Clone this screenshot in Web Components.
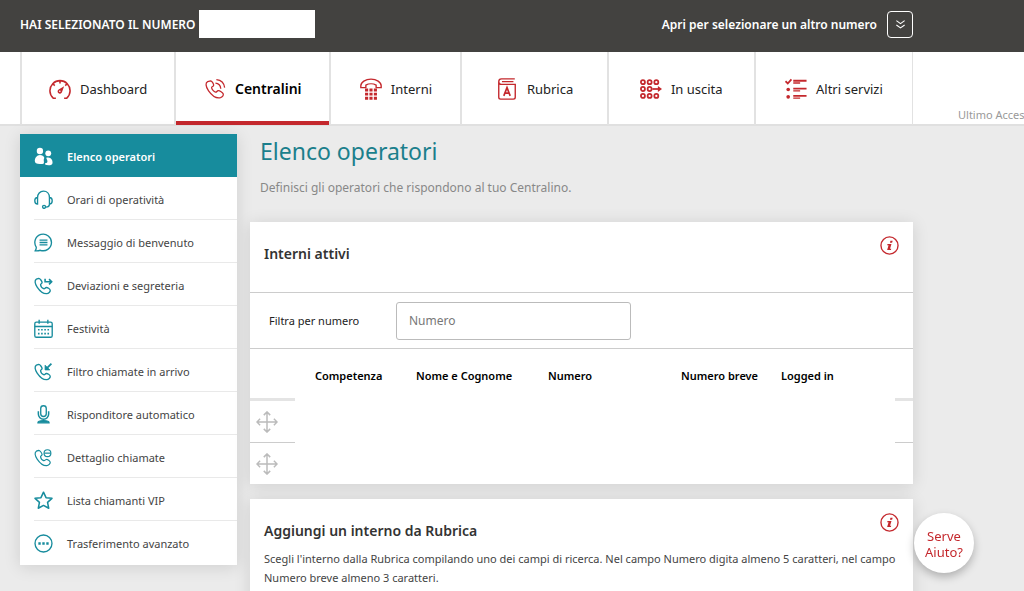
<!DOCTYPE html>
<html lang="it">
<head>
<meta charset="utf-8">
<meta name="viewport" content="width=device-width, initial-scale=1">
<title>Elenco operatori</title>
<style>
  html, body { margin: 0; }
  body {
    --red: #c4282d;
    --teal: #178c9d;
    --ink: #333;
    --left: 20px;
    --right: 111px;
    background: #ebebeb;
    color: var(--ink);
    font-family: "Noto Sans", sans-serif;
    font-size: 11px;
    overflow-x: hidden;
  }
</style>
</head>
<body>
<portal-app></portal-app>

<script>
const ICONS = {
  gauge: ['0 0 24 24', `<path d="M7.500 22H4.600A11 11 0 1 1 19.400 22H16.500M12 3v3M4.500 6.500l1.800 1.800M19.500 6.500l-1.800 1.800" stroke-width="1.700"/><path d="M16.500 9l-6 3.500a2.500 2.500 0 1 0 3.500 3.400z" fill="currentColor" stroke="none"/><circle cx="11.800" cy="14.400" r=".9" fill="#fff" stroke="none"/>`],
  phonewave: ['0 0 24 24', `<path d="M7.300 3.200L4 4C1.500 5 1.500 9 5 14s8.500 8.500 13 7.500c2-.5 3.500-2.500 3-4-.5-1.500-4-4-5.500-3.700-1.500.3-1.500 2-3 1.700-1.700-.5-4-3-4.200-5 0-1.300 1.800-1 2.200-2.500.3-1.200-1.500-4.300-3.200-4.800z" stroke-width="1.400"/><path d="M12.500 5.700c3.300.3 5.500 2.700 5.800 6M13.500 1.700c5 .5 8.500 4 9 8.800" stroke-width="1.400"/>`],
  deskphone: ['0 0 24 24', `<path d="M.900 8.500C.900 4.500 6 1.200 12 1.200S23.100 4.500 23.100 8.500V10.500h-5.500V7.800C14.500 6 9.500 6 6.400 7.800V10.500H.900z" stroke-width="1.500"/><path d="M5.500 11.500h3.400v3.200H5.500zM10.300 11.500h3.400v3.200h-3.400zM15.100 11.500h3.400v3.200h-3.400zM5.500 16h3.400v3.200H5.500zM10.300 16h3.400v3.200h-3.400zM15.100 16h3.400v3.200h-3.400zM5.500 20.500h3.400v3.200H5.500zM10.300 20.500h3.400v3.200h-3.400zM15.100 20.500h3.400v3.200h-3.400z" fill="currentColor" stroke="none"/>`],
  book: ['0 0 20 24', `<path d="M18.500 1H4a3 3 0 0 0 0 6h15v14a2 2 0 0 1-2 2H3a2 2 0 0 1-2-2V4M4.500 4h12.500" stroke-width="1.500"/><path d="M6.500 19.500L10 10.500l3.500 9M7.800 16.500h4.400" stroke-width="1.800"/>`],
  outgoing: ['0 0 24 24', `<g stroke-width="1.900"><circle cx="3.200" cy="4.500" r="2.200"/><circle cx="10.500" cy="4.500" r="2.200"/><circle cx="17.800" cy="4.500" r="2.200"/><circle cx="3.200" cy="12" r="2.200"/><circle cx="10.500" cy="12" r="2.200"/><circle cx="3.200" cy="19.500" r="2.200"/><circle cx="10.500" cy="19.500" r="2.200"/><circle cx="17.800" cy="19.500" r="2.200"/><path d="M13.500 12h8"/></g><path d="M19.500 8.800L24 12l-4.500 3.200z" fill="currentColor" stroke="none"/>`],
  checklist: ['0 0 24 24', `<path d="M.500 3.500L3 6l4-4.500" stroke-width="2"/><circle cx="3.500" cy="12.500" r="2" fill="currentColor" stroke="none"/><circle cx="3.500" cy="20.500" r="2" fill="currentColor" stroke="none"/><path d="M9 3h14.500M9 11.500h14.500M9 19.500h14.500" stroke-width="2"/><path d="M9 5.500h7.500M9 14h7.500M9 22h7.500" stroke-width="1.500"/>`],
  people: ['0 0 24 24', `<g fill="currentColor" stroke="none"><circle cx="7.500" cy="5" r="4"/><path d="M7.500 10c-4 0-6.500 4-6.500 7.500 0 3 2 4 6.500 4 2.500 0 4-.2 5-1 .5-2-1-4 .5-7-.8-2.200-2.700-3.500-5.500-3.500z"/><circle cx="18" cy="8" r="3.700"/><path d="M15.500 13.500c3-1 6.500 0 7.500 3.500 1 3.500.5 6-4.500 6-4 0-5-1-4.500-2.500 2.500 0 3.500-1.500 2.800-3.500-.4-1.200-1-2-1.300-3.500z"/></g>`],
  headset: ['0 0 24 24', `<path d="M4.500 9.500C4.500 5 7.500 1.500 12 1.500s7.500 3.500 7.500 8M4.500 9.300v8.400C2.300 17.700 1 16 1 13.500s1.300-4.200 3.500-4.200zM19.500 9.300v8.400c2.200 0 3.500-1.700 3.500-4.200s-1.300-4.200-3.500-4.200zM19.500 17.700c0 2.500-2 4-4.500 4"/><circle cx="12.700" cy="21.300" r="1.900"/>`],
  chat: ['0 0 24 24', `<path d="M1.500 22.500c1-1.500 1.600-3 1.300-4.800A10.500 10.500 0 1 1 8 21.800c-2 .7-4.500.9-6.500.7zM7 9h10M7 12h10M7 15h10"/>`],
  divert: ['0 0 24 24', `<path d="M6 3L3 4C.500 5.500 1 9.500 4 14s7.500 8.500 12 8.300c2.500-.2 4.700-2.500 4.500-4.300-.3-1.700-3.500-3.700-5-3.500s-1.800 2-3.300 1.500c-1.700-.7-3.700-3-3.900-5 0-1.300 1.700-1.200 1.900-2.700C10.300 6.700 7.500 3 6 3z"/><path d="M14 3.500v3.800H21M19 4l3.300 3.300L19 10.500" stroke-width="2"/>`],
  calendar: ['0 0 24 24', `<rect x="1" y="4" width="22" height="19" rx="2"/><path d="M1 9.500h22M6.500 1v5M17.500 1v5"/><path d="M5 13.500h2M9 13.500h2M13 13.500h2M17 13.500h2M5 18.500h2M9 18.500h2M13 18.500h2M17 18.500h2" stroke-width="2"/>`],
  incoming: ['0 0 24 24', `<path d="M6 3L3 4C.500 5.500 1 9.500 4 14s7.500 8.500 12 8.300c2.500-.2 4.700-2.500 4.500-4.300-.3-1.700-3.500-3.700-5-3.500s-1.800 2-3.300 1.500c-1.700-.7-3.700-3-3.900-5 0-1.300 1.700-1.200 1.900-2.700C10.300 6.700 7.500 3 6 3z"/><path d="M22 2L16 8" stroke-width="2.200"/><path d="M14 4v6h6z" fill="currentColor" stroke-width="1"/>`],
  mic: ['0 0 24 24', `<rect x="8.500" y="1" width="7" height="13.500" rx="3.500"/><path d="M5.500 8v3.500a6.500 6.500 0 0 0 13 0V8M12 18v3" stroke-width="1.900"/><path d="M5 22.500c0-2 2-2.700 7-2.700s7 .7 7 2.700z" fill="currentColor"/>`],
  detail: ['0 0 24 24', `<path d="M6 3L3 4C.500 5.500 1 9.500 4 14s7.500 8.500 12 8.300c2.500-.2 4.700-2.500 4.500-4.300-.3-1.700-3.500-3.700-5-3.500s-1.800 2-3.300 1.500c-1.700-.7-3.700-3-3.900-5 0-1.300 1.700-1.200 1.900-2.700C10.300 6.700 7.500 3 6 3z" stroke-width="1.500"/><circle cx="17" cy="6.500" r="4.300" stroke-width="1.500"/><path d="M13 6.500h8" stroke-width="1.500"/>`],
  star: ['0 0 24 24', `<path d="M12 1.500l3.200 6.900 7.500.9-5.600 5.100 1.500 7.400L12 18.200l-6.600 3.600 1.500-7.400L1.300 9.300l7.500-.9z" stroke-width="1.900" stroke-linejoin="round"/>`],
  dots: ['0 0 24 24', `<circle cx="12" cy="12" r="10.700"/><path d="M5.500 12h3M10.500 12h3M15.500 12h3" stroke-width="3"/>`],
  move: ['0 0 24 24', `<path d="M12 1.500v21M1.500 12h21M8.500 4.500L12 1l3.500 3.500M8.500 19.500L12 23l3.500-3.500M4.500 8.500L1 12l3.500 3.500M19.500 8.500L23 12l-3.500 3.500" stroke-width="1.600"/>`],
  chevrons: ['0 0 24 24', `<path d="M3 3.500l9 6.500 9-6.500M3 13l9 6.500 9-6.500" stroke-width="2.400"/>`],
  info: ['0 0 24 24', `<circle cx="12" cy="12" r="10.800" stroke-width="1.700"/><path d="M13.200 6h2.800l-.7 2.500h-2.800zM9.500 10h5l-1.800 6.200h1.500l-.4 1.600h-4.800l1.800-6.200H9z" fill="currentColor" stroke="none"/>`],
};

const define = (name, html, setup) => {
  const template = document.createElement('template');
  template.innerHTML = html;
  customElements.define(name, class extends HTMLElement {
    connectedCallback() {
      if (this.shadowRoot) return;
      const root = this.attachShadow({ mode: 'open' });
      root.append(template.content.cloneNode(true));
      if (setup) setup(this, root);
    }
  });
};

// Puts the icon named by the host's "icon" attribute before the link's label.
const addIcon = (host, root) => {
  const icon = document.createElement('ui-icon');
  icon.setAttribute('name', host.getAttribute('icon'));
  root.querySelector('a').prepend(icon);
};

define('ui-icon', `
  <style>
    :host { display: block; flex: none; width: var(--icon-size, 20px); height: var(--icon-size, 20px); }
    svg { display: block; width: 100%; height: 100%; fill: none; stroke: currentColor; stroke-width: 1.700; }
  </style>
  <svg aria-hidden="true"></svg>`, (host, root) => {
  const [box, body] = ICONS[host.getAttribute('name')];
  const svg = root.querySelector('svg');
  svg.setAttribute('viewBox', box);
  svg.innerHTML = body;
});

define('number-bar', `
  <style>
    :host {
      display: flex; align-items: center; justify-content: space-between;
      box-sizing: border-box; height: 52px; padding: 0 var(--right) 4px var(--left);
      background: #434240; color: #fff; font-size: 12px; font-weight: 600; white-space: nowrap;
    }
    div { display: flex; align-items: center; }
    .number { width: 116px; height: 28px; margin-left: 3px; background: #fff; }
    .open { gap: 10px; }
    button {
      --icon-size: 11px;
      display: grid; place-items: center; width: 26px; height: 27px; padding: 0;
      border: 1px solid #fff; border-radius: 4px; background: none; color: inherit;
    }
  </style>
  <div><span>HAI SELEZIONATO IL NUMERO</span><span class="number"></span></div>
  <div class="open"><span id="open">Apri per selezionare un altro numero</span>
    <button type="button" aria-labelledby="open"><ui-icon name="chevrons"></ui-icon></button></div>`);

define('nav-tab', `
  <style>
    :host { display: block; border-left: 2px solid #e2e2e2; }
    a {
      --icon-size: 22px;
      display: flex; align-items: center; justify-content: center; gap: 9px;
      box-sizing: border-box; height: 73px; padding-top: 4px; border-bottom: 4px solid transparent;
      color: #222; font-size: 13px; text-decoration: none; white-space: nowrap;
    }
    ui-icon { color: var(--red); }
    :host([active]) a { border-color: var(--red); color: #000; font-size: 14px; font-weight: 600; }
  </style>
  <a href="#"><slot></slot></a>`, addIcon);

define('main-nav', `
  <style>
    :host {
      display: grid; grid-template-columns: 1fr var(--right);
      height: 72px; padding-left: var(--left); border-bottom: 2px solid #e0e0e0; background: #fff;
    }
    nav { display: grid; grid-template-columns: 154fr 155fr 131fr 146fr 147fr 158fr; border-right: 1px solid #e2e2e2; }
    .access { align-self: end; margin-left: 45px; padding-bottom: 3px; overflow: hidden; color: #999; font-size: 11px; line-height: 14px; white-space: nowrap; }
  </style>
  <nav>
    <nav-tab icon="gauge">Dashboard</nav-tab>
    <nav-tab icon="phonewave" active>Centralini</nav-tab>
    <nav-tab icon="deskphone">Interni</nav-tab>
    <nav-tab icon="book">Rubrica</nav-tab>
    <nav-tab icon="outgoing">In uscita</nav-tab>
    <nav-tab icon="checklist">Altri servizi</nav-tab>
  </nav>
  <div class="access">Ultimo Acces</div>`);

define('side-item', `
  <style>
    :host { display: block; padding-left: 14px; }
    a {
      --icon-size: 19px;
      display: flex; align-items: center; gap: 14px; box-sizing: border-box; height: 43px; padding-top: 3px;
      border-bottom: 1px solid #e9e9e9; color: #444; text-decoration: none; white-space: nowrap;
    }
    ui-icon { color: var(--teal); }
    :host(:last-of-type) a { border-color: transparent; }
    :host([active]) { background: var(--teal); }
    :host([active]) a { border-color: transparent; color: #fff; font-weight: 600; }
    :host([active]) ui-icon { color: #fff; }
  </style>
  <a href="#"><slot></slot></a>`, addIcon);

define('side-menu', `
  <style>
    :host { display: block; padding-bottom: 1px; background: #fff; box-shadow: 0 2px 16px rgba(0, 0, 0, .12); }
  </style>
  <nav>
    <side-item icon="people" active>Elenco operatori</side-item>
    <side-item icon="headset">Orari di operatività</side-item>
    <side-item icon="chat">Messaggio di benvenuto</side-item>
    <side-item icon="divert">Deviazioni e segreteria</side-item>
    <side-item icon="calendar">Festività</side-item>
    <side-item icon="incoming">Filtro chiamate in arrivo</side-item>
    <side-item icon="mic">Risponditore automatico</side-item>
    <side-item icon="detail">Dettaglio chiamate</side-item>
    <side-item icon="star">Lista chiamanti VIP</side-item>
    <side-item icon="dots">Trasferimento avanzato</side-item>
  </nav>`);

define('page-title', `
  <style>
    :host { display: block; padding-left: 10px; }
    h1 { margin: 0; color: #1b7f8c; font-size: 23px; font-weight: 400; line-height: 34px; }
    p { margin: 10px 0 0; color: #888; font-size: 12px; line-height: 20px; }
  </style>
  <h1>Elenco operatori</h1>
  <p>Definisci gli operatori che rispondono al tuo Centralino.</p>`);

define('info-card', `
  <style>
    :host { display: block; background: #fff; box-shadow: 0 2px 16px rgba(0, 0, 0, .12); }
    header { display: flex; justify-content: space-between; padding: 14px 14px 0; }
    h2 { margin: 8px 0 0; font-size: 14px; font-weight: 600; line-height: 20px; }
    button { --icon-size: 19px; height: 19px; padding: 0; border: 0; background: none; color: var(--red); }
  </style>
  <header><h2></h2><button type="button" aria-label="Informazioni"><ui-icon name="info"></ui-icon></button></header>
  <slot></slot>`, (host, root) => {
  root.querySelector('h2').textContent = host.getAttribute('heading');
});

define('number-filter', `
  <style>
    :host {
      display: flex; align-items: center; box-sizing: border-box; height: 57px; margin-top: 28px;
      padding-left: 19px; border: solid #ccc; border-width: 1px 0; color: #222;
    }
    label { width: 127px; }
    input {
      box-sizing: border-box; width: 235px; height: 38px; padding: 0 12px;
      border: 1px solid #bbb; border-radius: 3px; font: 12px "Noto Sans", sans-serif;
    }
    input::placeholder { color: #777; opacity: 1; }
  </style>
  <label for="number">Filtra per numero</label>
  <input id="number" type="text" placeholder="Numero">`);

define('extension-table', `
  <style>
    :host { display: block; }
    table { width: 100%; table-layout: fixed; border-collapse: separate; border-spacing: 0; }
    th, td { box-sizing: border-box; padding: 0; }
    th { height: 49px; padding: 5px 0 0 20px; color: #000; font-size: 11px; font-weight: 600; line-height: 16px; text-align: left; white-space: nowrap; }
    td { height: 42px; color: #bbb; }
    tr > :first-child { width: 45px; padding-left: 6px; }
    ui-icon { --icon-size: 22px; }
    tbody tr:first-child > td { height: 44px; }
    tbody tr:first-child > :is(:first-child, :last-child) { border-top: 3px solid #e4e4e4; }
    tbody tr + tr > :is(:first-child, :last-child) { border-top: 1px solid #ccc; }
    .competence { width: 101px; } .name { width: 132px; } .number { width: 133px; }
    .short { width: 100px; } .end { width: 18px; padding: 0; }
  </style>
  <table>
    <thead><tr><th></th><th class="competence">Competenza</th><th class="name">Nome e Cognome</th><th class="number">Numero</th><th class="short">Numero breve</th><th>Logged in</th><th class="end"></th></tr></thead>
    <tbody>
      <tr><td><ui-icon name="move"></ui-icon></td><td></td><td></td><td></td><td></td><td></td><td></td></tr>
      <tr><td><ui-icon name="move"></ui-icon></td><td></td><td></td><td></td><td></td><td></td><td></td></tr>
    </tbody>
  </table>`);

define('help-button', `
  <style>
    :host { display: block; position: fixed; right: 50px; bottom: 18px; }
    button {
      width: 60px; height: 60px; padding: 2px 0 0; border: 0; border-radius: 50%; background: #fff;
      box-shadow: 0 4px 8px rgba(0, 0, 0, .25); color: var(--red); font: 13px/16px "Noto Sans", sans-serif;
    }
  </style>
  <button type="button">Serve<br>Aiuto?</button>`);

define('portal-app', `
  <style>
    :host { display: block; height: 100vh; overflow: hidden; }
    main { display: grid; grid-template-columns: 217px minmax(0, 1fr); gap: 13px; align-items: start; padding: 8px var(--right) 0 var(--left); }
    section { display: grid; gap: 15px; }
    page-title { margin-bottom: 9px; }
    p { margin: 0; padding: 8px 14px 24px; color: #444; line-height: 19px; }
  </style>
  <number-bar></number-bar>
  <main-nav></main-nav>
  <main>
    <side-menu></side-menu>
    <section>
      <page-title></page-title>
      <info-card heading="Interni attivi">
        <number-filter></number-filter>
        <extension-table></extension-table>
      </info-card>
      <info-card heading="Aggiungi un interno da Rubrica">
        <p>Scegli l'interno dalla Rubrica compilando uno dei campi di ricerca. Nel campo Numero digita almeno 5 caratteri, nel campo Numero breve almeno 3 caratteri.</p>
      </info-card>
    </section>
  </main>
  <help-button></help-button>`);
</script>
</body>
</html>
